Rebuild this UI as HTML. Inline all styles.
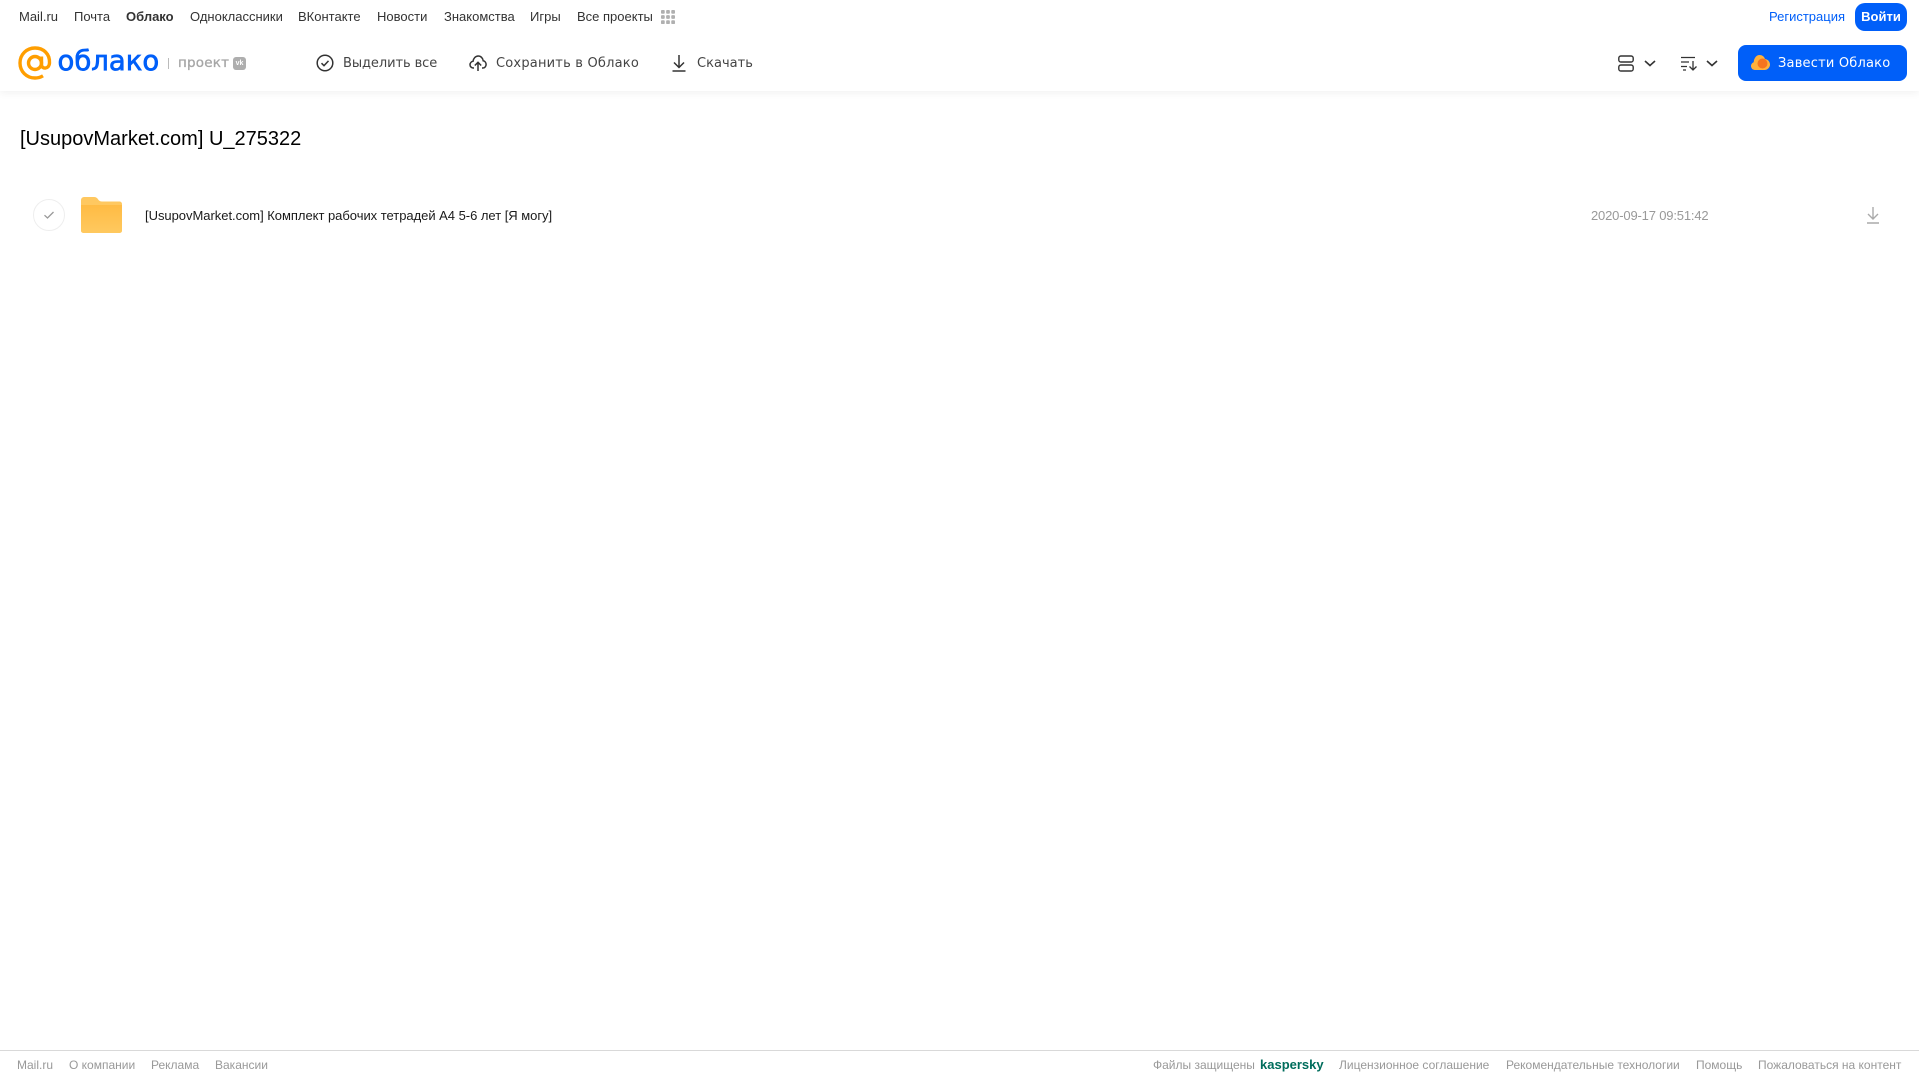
<!DOCTYPE html>
<html lang="ru"><head><meta charset="utf-8"><title>Облако</title>
<style>
html,body{margin:0;padding:0;background:#fff}
body{width:1919px;height:1079px;position:relative;overflow:hidden;font-family:"Liberation Sans",sans-serif}
.t{position:absolute;white-space:nowrap;line-height:20px}
.n{top:7px;font-size:13px;color:#333}
.b{top:53.500px;color:#444;font-family:"DejaVu Sans","Liberation Sans",sans-serif;font-size:13px}
.f{top:1055px;font-size:12px;color:#999}
svg{position:absolute;display:block}
</style></head><body>
<div style="position:absolute;left:0;top:0;width:1919px;height:91px;background:#fff;box-shadow:0 2px 8px rgba(0,0,0,.06)"></div>

<span class="t n" style="left:19px">Mail.ru</span>
<span class="t n" style="left:74px">Почта</span>
<span class="t n" style="left:126px;font-weight:bold">Облако</span>
<span class="t n" style="left:190px">Одноклассники</span>
<span class="t n" style="left:298px">ВКонтакте</span>
<span class="t n" style="left:377px">Новости</span>
<span class="t n" style="left:444px">Знакомства</span>
<span class="t n" style="left:530px">Игры</span>
<span class="t n" style="left:577px">Все проекты</span>
<svg style="left:661px;top:10px" width="14" height="14" viewBox="0 0 15 15" fill="#b0b0b0"><rect x="0" y="0" width="4" height="4" rx="1"/><rect x="5.500" y="0" width="4" height="4" rx="1"/><rect x="11" y="0" width="4" height="4" rx="1"/><rect x="0" y="5.500" width="4" height="4" rx="1"/><rect x="5.500" y="5.500" width="4" height="4" rx="1"/><rect x="11" y="5.500" width="4" height="4" rx="1"/><rect x="0" y="11" width="4" height="4" rx="1"/><rect x="5.500" y="11" width="4" height="4" rx="1"/><rect x="11" y="11" width="4" height="4" rx="1"/></svg>

<span class="t n" style="left:1769px;color:#005ff9">Регистрация</span>
<div style="position:absolute;left:1855px;top:3px;width:52px;height:28px;border-radius:10px;background:#005ff9;color:#fff;font-size:13px;font-weight:bold;line-height:28px;text-align:center">Войти</div>

<svg style="left:18px;top:46px" width="34" height="34" viewBox="0 0 34 34" fill="none" stroke="#ff9e00" stroke-width="3.400"><circle cx="17" cy="17" r="6.500"/><path d="M23.500 10.500V18.500c0 5 7.500 5 8-1.500C32 8 25.500 2 17 2 8.500 2 2 8.500 2 17s6.500 15 15 15c3 0 5.500-.7 8-2.200"/></svg>
<span class="t" style="left:57.500px;top:45px;font-family:'DejaVu Sans',sans-serif;font-size:27.500px;line-height:32px;color:#005ff9;-webkit-text-stroke:.7px #005ff9">облако</span>
<div style="position:absolute;left:168px;top:58px;width:1px;height:11px;background:#bbb"></div>
<span class="t" style="left:178px;top:52.500px;font-family:'DejaVu Sans',sans-serif;font-size:13.500px;color:#a6a6a6;-webkit-text-stroke:.3px #a6a6a6;letter-spacing:.2px">проект</span>
<div style="position:absolute;left:233px;top:57px;width:13px;height:13px;border-radius:3px;background:#aeaeae;color:#fff;font-size:7px;font-weight:bold;line-height:13px;text-align:center">vk</div>

<svg style="left:316px;top:54px" width="18" height="18" viewBox="0 0 18 18" fill="none" stroke="#333" stroke-width="1.500"><circle cx="9" cy="9" r="7.800"/><path d="M5.500 9.200l2.500 2.500 4.500-4.800"/></svg>
<span class="t b" style="left:343px;letter-spacing:-.08px">Выделить все</span>
<svg style="left:469px;top:54px" width="18" height="18" viewBox="0 0 18 18" fill="none" stroke="#333" stroke-width="1.500"><path d="M5 14H4.500C2.500 14 1 12.500 1 10.700c0-1.700 1.300-3.200 3-3.400C4.500 4.300 6.500 2 9.200 2c2.700 0 4.700 2.200 5 4.800 1.700.3 2.900 1.900 2.900 3.700 0 1.900-1.400 3.500-3.300 3.500H13"/><path d="M9 17V8.500M5.800 11.500L9 8.300l3.200 3.200"/></svg>
<span class="t b" style="left:496px;letter-spacing:.2px">Сохранить в Облако</span>
<svg style="left:671px;top:54px" width="16" height="18" viewBox="0 0 16 18" fill="none" stroke="#333" stroke-width="1.500"><path d="M8 1v12M3 8.500L8 13.500 13 8.500M1.500 17h13"/></svg>
<span class="t b" style="left:697px;letter-spacing:.02px">Скачать</span>

<svg style="left:1618px;top:55px" width="16" height="17" viewBox="0 0 16 17" fill="none" stroke="#333" stroke-width="1.400"><rect x=".8" y="1" width="14.400" height="6" rx="2"/><rect x=".8" y="10" width="14.400" height="6" rx="2"/></svg>
<svg style="left:1644px;top:60px" width="12" height="7" viewBox="0 0 12 7" fill="none" stroke="#333" stroke-width="1.600"><path d="M1 1l5 4.500L11 1"/></svg>
<svg style="left:1681px;top:56px" width="17" height="15" viewBox="0 0 17 15" fill="none" stroke="#333" stroke-width="1.300"><path d="M0 1.500h14M0 6h8M0 10.500h6M2 14h3M12 5v9M8.500 10.500L12 14l3.500-3.500"/></svg>
<svg style="left:1706px;top:60px" width="12" height="7" viewBox="0 0 12 7" fill="none" stroke="#333" stroke-width="1.600"><path d="M1 1l5 4.500L11 1"/></svg>

<div style="position:absolute;left:1738px;top:45px;width:169px;height:36px;border-radius:8px;background:#005ff9"></div>
<svg style="left:1751px;top:54px" width="19" height="16" viewBox="0 0 19 16"><path d="M4 16C1.800 16 0 14.200 0 12c0-1.800 1.100-3.200 2.700-3.800C3 4 5.500 1 8.500 1c2.700 0 4.700 1.600 5.500 4 2.800.3 5 2.600 5 5.500 0 3-2.500 5.500-5.500 5.500z" fill="#ffb13d"/><circle cx="11.500" cy="9.500" r="5" fill="#f5741f"/></svg>
<span class="t" style="left:1778px;top:53.500px;color:#fff;font-size:13px;letter-spacing:.2px;font-family:'DejaVu Sans','Liberation Sans',sans-serif">Завести Облако</span>

<span class="t" style="left:20px;top:124.500px;font-size:20px;line-height:28px;color:#000">[UsupovMarket.com] U_275322</span>

<div style="position:absolute;left:33px;top:199px;width:30px;height:30px;border:1px solid #eee;border-radius:50%"></div>
<svg style="left:43px;top:210px" width="12" height="10" viewBox="0 0 12 10" fill="none" stroke="#999" stroke-width="1.300"><path d="M1.500 5.200L4.500 8 10.500 2"/></svg>
<svg style="left:81px;top:197px" width="41" height="36" viewBox="0 0 41 36"><defs><linearGradient id="g" x1="0" y1="0" x2="0" y2="1"><stop offset="0" stop-color="#ffbb44"/><stop offset="1" stop-color="#ffc95f"/></linearGradient></defs><path d="M3 0h10c2 0 3 .8 4 2.200C18 3.600 19 4.500 21 4.500H38.500a2.500 2.500 0 0 1 2.500 2.500V33.500a2.500 2.500 0 0 1-2.500 2.500H2.500a2.500 2.500 0 0 1-2.500-2.500V3A3 3 0 0 1 3 0z" fill="#ffc860"/><path d="M0 8H41V33.500a2.500 2.500 0 0 1-2.500 2.500H2.500a2.500 2.500 0 0 1-2.500-2.500z" fill="url(#g)"/></svg>
<span class="t" style="left:145px;top:206px;font-size:13px;letter-spacing:-.03px;color:#1a1a1a">[UsupovMarket.com] Комплект рабочих тетрадей А4 5-6 лет [Я могу]</span>
<span class="t" style="left:1591px;top:206px;font-size:13px;letter-spacing:-.17px;color:#999">2020-09-17 09:51:42</span>
<svg style="left:1866px;top:206px" width="14" height="18" viewBox="0 0 14 18" fill="none" stroke="#aaa" stroke-width="1.400"><path d="M7 1v12M2 8l5 5 5-5M1 17h12"/></svg>

<div style="position:absolute;left:0;top:1050px;width:1919px;height:1px;background:#d9d9d9"></div>
<span class="t f" style="left:17px">Mail.ru</span>
<span class="t f" style="left:69px">О компании</span>
<span class="t f" style="left:151px">Реклама</span>
<span class="t f" style="left:215px">Вакансии</span>
<span class="t f" style="left:1153px">Файлы защищены</span>
<span class="t f" style="left:1260px;color:#006d5c;font-weight:bold;font-size:13px">kaspersky</span>
<span class="t f" style="left:1339px">Лицензионное соглашение</span>
<span class="t f" style="left:1506px">Рекомендательные технологии</span>
<span class="t f" style="left:1696px">Помощь</span>
<span class="t f" style="left:1758px">Пожаловаться на контент</span>
</body></html>
